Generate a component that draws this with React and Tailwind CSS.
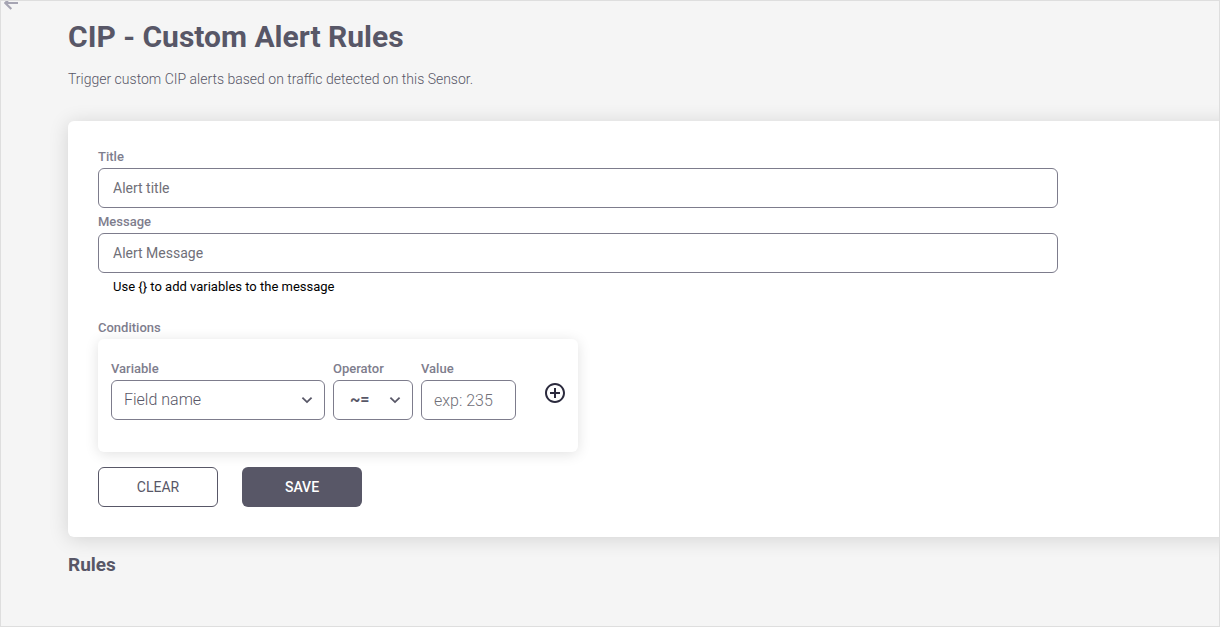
import React from "react";
import { MdAddCircleOutline } from "react-icons/md";

const field =
  "h-10 w-full rounded-md border border-[#7d7c8c] bg-white text-[#585767] placeholder:text-[#706f78] placeholder:opacity-100 outline-none";
const labelText = "block pt-[3px] text-[13px] leading-[22px] font-medium text-[#7e7d8d]";

function Chevron() {
  return (
    <svg
      aria-hidden="true"
      viewBox="0 0 12 8"
      className="pointer-events-none absolute top-4 right-3 h-2 w-3"
      fill="none"
      stroke="#585767"
      strokeWidth="1.8"
    >
      <path d="M1.4 1.6 L6 6.1 L10.6 1.6" />
    </svg>
  );
}

function BackArrow() {
  return (
    <svg
      aria-hidden="true"
      viewBox="0 0 14 14"
      className="h-3.5 w-3.5"
      fill="none"
      stroke="#a6a5b3"
      strokeWidth="2.2"
    >
      <path d="M14 7 H1.4 M7.3 1 L1.3 7 L7.3 13" />
    </svg>
  );
}

export default function App() {
  return (
    <div className="relative min-h-screen overflow-hidden border border-[#dedede] bg-[#f5f5f5] pl-[67px] font-['Roboto',sans-serif] text-[#585767]">
      <a href="#back" aria-label="Back" className="absolute -top-[5px] left-[3px]">
        <BackArrow />
      </a>

      <header className="pt-4">
        <h1 className="text-[30px] leading-10 font-bold">CIP - Custom Alert Rules</h1>
        <p className="mt-3 text-sm leading-5 font-light">
          Trigger custom CIP alerts based on traffic detected on this Sensor.
        </p>
      </header>

      <form
        onSubmit={(e) => e.preventDefault()}
        className="mt-8 -mr-6 rounded-md bg-white px-[30px] pt-[22px] pb-[30px] shadow-[0_2px_20px_rgba(0,0,0,0.14)]"
      >
        <div className="max-w-[960px]">
          <label htmlFor="title" className={labelText}>Title</label>
          <input id="title" type="text" placeholder="Alert title" className={`${field} px-3.5 text-sm`} />
          <label htmlFor="message" className={labelText}>Message</label>
          <input id="message" type="text" placeholder="Alert Message" className={`${field} px-3.5 text-sm`} />
          <p className="px-[15px] pt-0.5 text-[13px] leading-6 text-black">
            Use {"{}"} to add variables to the message
          </p>
        </div>

        <fieldset className="mt-[15px] max-w-[480px]">
          <legend className={labelText}>Conditions</legend>
          <div className="flex items-start gap-2 rounded-md bg-white pt-4 pr-[11px] pb-8 pl-[13px] shadow-[0_2px_14px_rgba(0,0,0,0.12)]">
            <div className="w-[214px]">
              <label htmlFor="variable" className={labelText}>Variable</label>
              <div className="relative">
                <select id="variable" className={`${field} appearance-none px-3 text-base font-light`}>
                  <option>Field name</option>
                </select>
                <Chevron />
              </div>
            </div>
            <div className="w-20">
              <label htmlFor="operator" className={labelText}>Operator</label>
              <div className="relative">
                <select id="operator" className={`${field} appearance-none px-4 text-base font-bold`}>
                  <option>~=</option>
                </select>
                <Chevron />
              </div>
            </div>
            <div className="w-[95px]">
              <label htmlFor="value" className={labelText}>Value</label>
              <input id="value" type="text" placeholder="exp: 235" className={`${field} px-3 text-base font-light`} />
            </div>
            <button type="button" aria-label="Add condition" className="mt-[26px] ml-auto text-[#2b2a3d]">
              <MdAddCircleOutline size={24} />
            </button>
          </div>
        </fieldset>

        <div className="mt-[15px] flex gap-6">
          <button type="reset" className="h-10 w-[120px] rounded-md border border-[#585767] bg-white text-sm">
            CLEAR
          </button>
          <button type="submit" className="h-10 w-[120px] rounded-md bg-[#585767] text-sm font-medium text-white">
            SAVE
          </button>
        </div>
      </form>

      <h2 className="mt-4 text-[19px] leading-6 font-bold">Rules</h2>
    </div>
  );
}
